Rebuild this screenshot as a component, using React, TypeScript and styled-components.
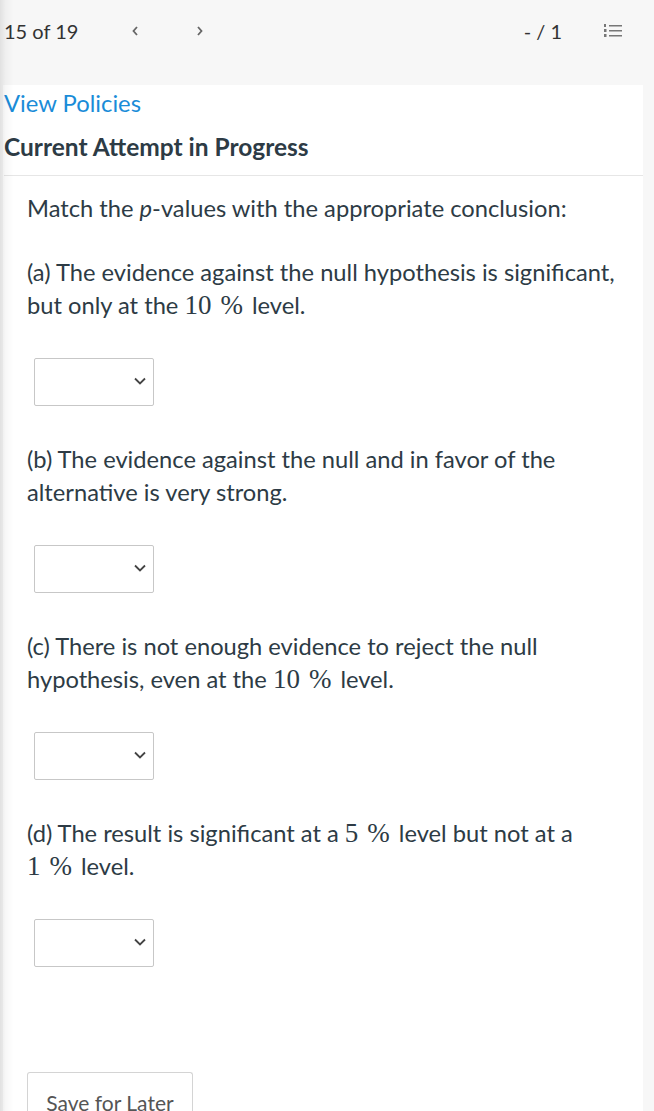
import React from "react";
import styled, { createGlobalStyle } from "styled-components";

const Global = createGlobalStyle`
  html, body { margin: 0; padding: 0; background: #f7f7f7; }
  body { font-family: Lato, "Open Sans", sans-serif; color: #2d3b45; }
`;

const Page = styled.div`
  position: relative;
  min-height: 1111px;
  background: #f7f7f7;
  overflow: hidden;
  &::after {
    content: "";
    position: absolute;
    left: 0; top: 0; bottom: 0;
    width: 14px;
    background: linear-gradient(to right, rgba(0,0,0,0.09), rgba(0,0,0,0.03) 40%, rgba(0,0,0,0));
    pointer-events: none;
  }
`;

const TopBar = styled.div`
  height: 85px;
  display: flex;
  align-items: flex-start;
  padding: 20px 0 0 4px;
  box-sizing: border-box;
  font-size: 20px;
  color: #333;
`;

const Counter = styled.span`
  line-height: 22px;
  width: 127px;
`;

const NavBtn = styled.span`
  display: inline-flex;
  width: 65px;
  height: 22px;
  align-items: center;
  color: #666;
  svg { display: block; }
`;

const Spacer = styled.div` flex: 1; `;

const Score = styled.span`
  line-height: 22px;
  margin-right: 42px;
`;

const ListIcon = styled.span`
  display: inline-flex;
  height: 22px;
  align-items: center;
  margin-right: 32px;
`;

const Panel = styled.main`
  background: #fff;
  margin-left: 3px;
  width: 640px;
  min-height: 1026px;
`;

const PolicyLink = styled.a`
  display: block;
  padding: 4px 0 0 1px;
  font-size: 23.8px;
  line-height: 28px;
  color: #1a8cd8;
  text-decoration: none;
`;

const Heading = styled.h2`
  margin: 16px 0 0 1px;
  font-size: 24.5px;
  line-height: 28px;
  font-weight: 700;
  color: #2d3b45;
`;

const Divider = styled.hr`
  margin: 14px 0 0 1px;
  border: 0;
  border-top: 1px solid #e6e6e6;
`;

const Body = styled.div`
  padding: 16px 20px 0 24px;
  font-size: 23.7px;
  line-height: 33px;
  color: #2d3b45;
`;

const Para = styled.p`
  margin: 0 0 31px;
`;

const Part = styled.div`
  margin-bottom: 37px;
`;

const PartText = styled.p`
  margin: 0 0 36px;
`;

const NoWrap = styled.span`
  white-space: nowrap;
`;

const Math = styled.span`
  font-family: "Liberation Serif", "DejaVu Serif", serif;
  font-size: 27px;
  line-height: 1;
  white-space: nowrap;
  margin-right: 9px;
`;

const PctSign = styled.span`
  margin-left: 9px;
`;

const SelectBox = styled.div`
  position: relative;
  width: 120px;
  height: 48px;
  margin-left: 7px;
  box-sizing: border-box;
  border: 1px solid #c7c7c7;
  border-radius: 2px;
  background: #fff;
  svg { position: absolute; right: 6px; top: 17px; }
`;

const SaveButton = styled.button`
  margin: 105px 0 0 0;
  width: 166px;
  height: 48px;
  box-sizing: border-box;
  border: 1px solid #d4d4d4;
  border-bottom: none;
  border-radius: 3px 3px 0 0;
  background: #fff;
  font-family: Lato, sans-serif;
  font-size: 21px;
  color: #555;
  padding: 12px 0 0;
  text-align: center;
  display: block;
`;

const Chevron = ({ dir }: { dir: "l" | "r" }) => (
  <svg width="8" height="12" viewBox="0 0 8 12">
    <path
      d={dir === "l" ? "M6 2 L2.5 6 L6 10" : "M2 2 L5.5 6 L2 10"}
      fill="none"
      stroke="#666"
      strokeWidth="1.8"
    />
  </svg>
);

const Caret = () => (
  <svg width="14" height="10" viewBox="0 0 14 10">
    <path d="M2 2.5 L7 7.5 L12 2.5" fill="none" stroke="#444" strokeWidth="1.8" />
  </svg>
);

const NumList = () => (
  <svg width="18" height="14" viewBox="0 0 18 14">
    <g fill="#777">
      <rect x="0" y="0" width="2" height="3" />
      <rect x="0" y="5" width="2.5" height="3" />
      <rect x="0" y="10" width="2.5" height="3" />
      <rect x="5" y="1" width="13" height="1.5" />
      <rect x="5" y="6" width="13" height="1.5" />
      <rect x="5" y="11" width="13" height="1.5" />
    </g>
  </svg>
);

const Pct = ({ v }: { v: string }) => (
  <Math>
    {v}
    <PctSign>%</PctSign>
  </Math>
);

const Select = () => (
  <SelectBox>
    <Caret />
  </SelectBox>
);

export default function App() {
  return (
    <Page>
      <Global />
      <TopBar>
        <Counter>15 of 19</Counter>
        <NavBtn><Chevron dir="l" /></NavBtn>
        <NavBtn><Chevron dir="r" /></NavBtn>
        <Spacer />
        <Score>- / 1</Score>
        <ListIcon><NumList /></ListIcon>
      </TopBar>
      <Panel>
        <PolicyLink href="#">View Policies</PolicyLink>
        <Heading>Current Attempt in Progress</Heading>
        <Divider />
        <Body>
          <Para>
            Match the <i>p</i>-values with the appropriate conclusion:
          </Para>
          <Part>
            <PartText>
              (a) The evidence against the null hypothesis is significant, but only at the <Pct v="10" />level.
            </PartText>
            <Select />
          </Part>
          <Part>
            <PartText>
              (b) The evidence against the null and in favor of the alternative is very strong.
            </PartText>
            <Select />
          </Part>
          <Part>
            <PartText>
              (c) There is not enough evidence to reject the null hypothesis, even at the <Pct v="10" />level.
            </PartText>
            <Select />
          </Part>
          <Part>
            <PartText>
              (d) The result is significant at a <Pct v="5" />level but not at a{" "}
              <NoWrap><Pct v="1" />level.</NoWrap>
            </PartText>
            <Select />
          </Part>
          <SaveButton>Save for Later</SaveButton>
        </Body>
      </Panel>
    </Page>
  );
}
